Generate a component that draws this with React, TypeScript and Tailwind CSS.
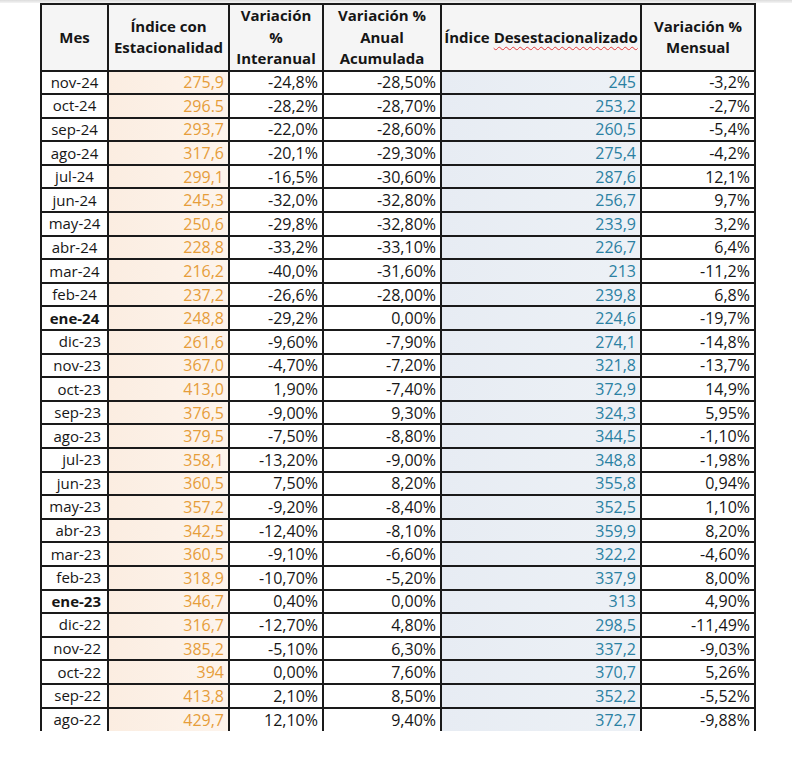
import React from 'react';

type Row = [string, string, string, string, string, string];

// mes, índice con estacionalidad, var interanual, var anual acumulada, desestacionalizado, var mensual
const rows: Row[] = [
  ['nov-24', '275,9', '-24,8%', '-28,50%', '245', '-3,2%'],
  ['oct-24', '296.5', '-28,2%', '-28,70%', '253,2', '-2,7%'],
  ['sep-24', '293,7', '-22,0%', '-28,60%', '260,5', '-5,4%'],
  ['ago-24', '317,6', '-20,1%', '-29,30%', '275,4', '-4,2%'],
  ['jul-24', '299,1', '-16,5%', '-30,60%', '287,6', '12,1%'],
  ['jun-24', '245,3', '-32,0%', '-32,80%', '256,7', '9,7%'],
  ['may-24', '250,6', '-29,8%', '-32,80%', '233,9', '3,2%'],
  ['abr-24', '228,8', '-33,2%', '-33,10%', '226,7', '6,4%'],
  ['mar-24', '216,2', '-40,0%', '-31,60%', '213', '-11,2%'],
  ['feb-24', '237,2', '-26,6%', '-28,00%', '239,8', '6,8%'],
  ['ene-24', '248,8', '-29,2%', '0,00%', '224,6', '-19,7%'],
  ['dic-23', '261,6', '-9,60%', '-7,90%', '274,1', '-14,8%'],
  ['nov-23', '367,0', '-4,70%', '-7,20%', '321,8', '-13,7%'],
  ['oct-23', '413,0', '1,90%', '-7,40%', '372,9', '14,9%'],
  ['sep-23', '376,5', '-9,00%', '9,30%', '324,3', '5,95%'],
  ['ago-23', '379,5', '-7,50%', '-8,80%', '344,5', '-1,10%'],
  ['jul-23', '358,1', '-13,20%', '-9,00%', '348,8', '-1,98%'],
  ['jun-23', '360,5', '7,50%', '8,20%', '355,8', '0,94%'],
  ['may-23', '357,2', '-9,20%', '-8,40%', '352,5', '1,10%'],
  ['abr-23', '342,5', '-12,40%', '-8,10%', '359,9', '8,20%'],
  ['mar-23', '360,5', '-9,10%', '-6,60%', '322,2', '-4,60%'],
  ['feb-23', '318,9', '-10,70%', '-5,20%', '337,9', '8,00%'],
  ['ene-23', '346,7', '0,40%', '0,00%', '313', '4,90%'],
  ['dic-22', '316,7', '-12,70%', '4,80%', '298,5', '-11,49%'],
  ['nov-22', '385,2', '-5,10%', '6,30%', '337,2', '-9,03%'],
  ['oct-22', '394', '0,00%', '7,60%', '370,7', '5,26%'],
  ['sep-22', '413,8', '2,10%', '8,50%', '352,2', '-5,52%'],
  ['ago-22', '429,7', '12,10%', '9,40%', '372,7', '-9,88%'],
];

const cell = 'border-2 border-[#1a1a1a] h-[23.6px] p-0 leading-none';

export default function App() {
  return (
    <div className="min-h-[762px] w-[805px] bg-white text-[#161616]" style={{ fontFamily: '"Open Sans", "Noto Sans", sans-serif' }}>
      <div className="h-[3px] w-[792px] bg-gradient-to-b from-[#dcdcdc] to-[#f4f4f4]" />
      <table className="ml-[40px] w-[714px] table-fixed border-collapse text-[15px]">
        <colgroup>
          <col className="w-[67px]" />
          <col className="w-[121px]" />
          <col className="w-[94px]" />
          <col className="w-[118px]" />
          <col className="w-[200px]" />
          <col className="w-[114px]" />
        </colgroup>
        <thead>
          <tr className="bg-[#f5f5f5] text-center align-middle font-bold leading-[21.5px]">
            <th className="h-[65px] border-2 border-[#1a1a1a] p-0">Mes</th>
            <th className="border-2 border-[#1a1a1a] p-0">
              Índice con
              <br />
              Estacionalidad
            </th>
            <th className="border-2 border-[#1a1a1a] p-0">
              Variación
              <br />%<br />
              Interanual
            </th>
            <th className="border-2 border-[#1a1a1a] p-0">
              Variación %
              <br />
              Anual
              <br />
              Acumulada
            </th>
            <th className="border-2 border-[#1a1a1a] p-0">
              Índice{' '}
              <span className="underline decoration-[#e23a3a] decoration-wavy decoration-1 underline-offset-[3px]">
                Desestacionalizado
              </span>
            </th>
            <th className="border-2 border-[#1a1a1a] p-0">
              Variación %
              <br />
              Mensual
            </th>
          </tr>
        </thead>
        <tbody>
          {rows.map((r, i) => {
            const last = i === rows.length - 1;
            const is24 = r[0].endsWith('24');
            const bold = r[0].startsWith('ene');
            const b = last ? ' border-b-0' : '';
            return (
              <tr key={r[0]}>
                <td className={`${cell}${b} text-[15px] ${is24 ? 'text-center' : 'pr-[6px] text-right'} ${bold ? 'font-bold' : ''}`}>
                  {r[0]}
                </td>
                <td className={`${cell}${b} bg-gradient-to-r from-[#fbede1] to-[#fdf4ec] pr-[4px] text-right text-[16px] text-[#e69d3a]`}>
                  {r[1]}
                </td>
                <td className={`${cell}${b} pr-[4px] text-right text-[16px]`}>{r[2]}</td>
                <td className={`${cell}${b} pr-[4px] text-right text-[16px]`}>{r[3]}</td>
                <td className={`${cell}${b} bg-gradient-to-r from-[#e7ecf3] to-[#edf1f6] pr-[4px] text-right text-[16px] text-[#2a80a2]`}>
                  {r[4]}
                </td>
                <td className={`${cell}${b} pr-[4px] text-right text-[16px]`}>{r[5]}</td>
              </tr>
            );
          })}
        </tbody>
      </table>
    </div>
  );
}
